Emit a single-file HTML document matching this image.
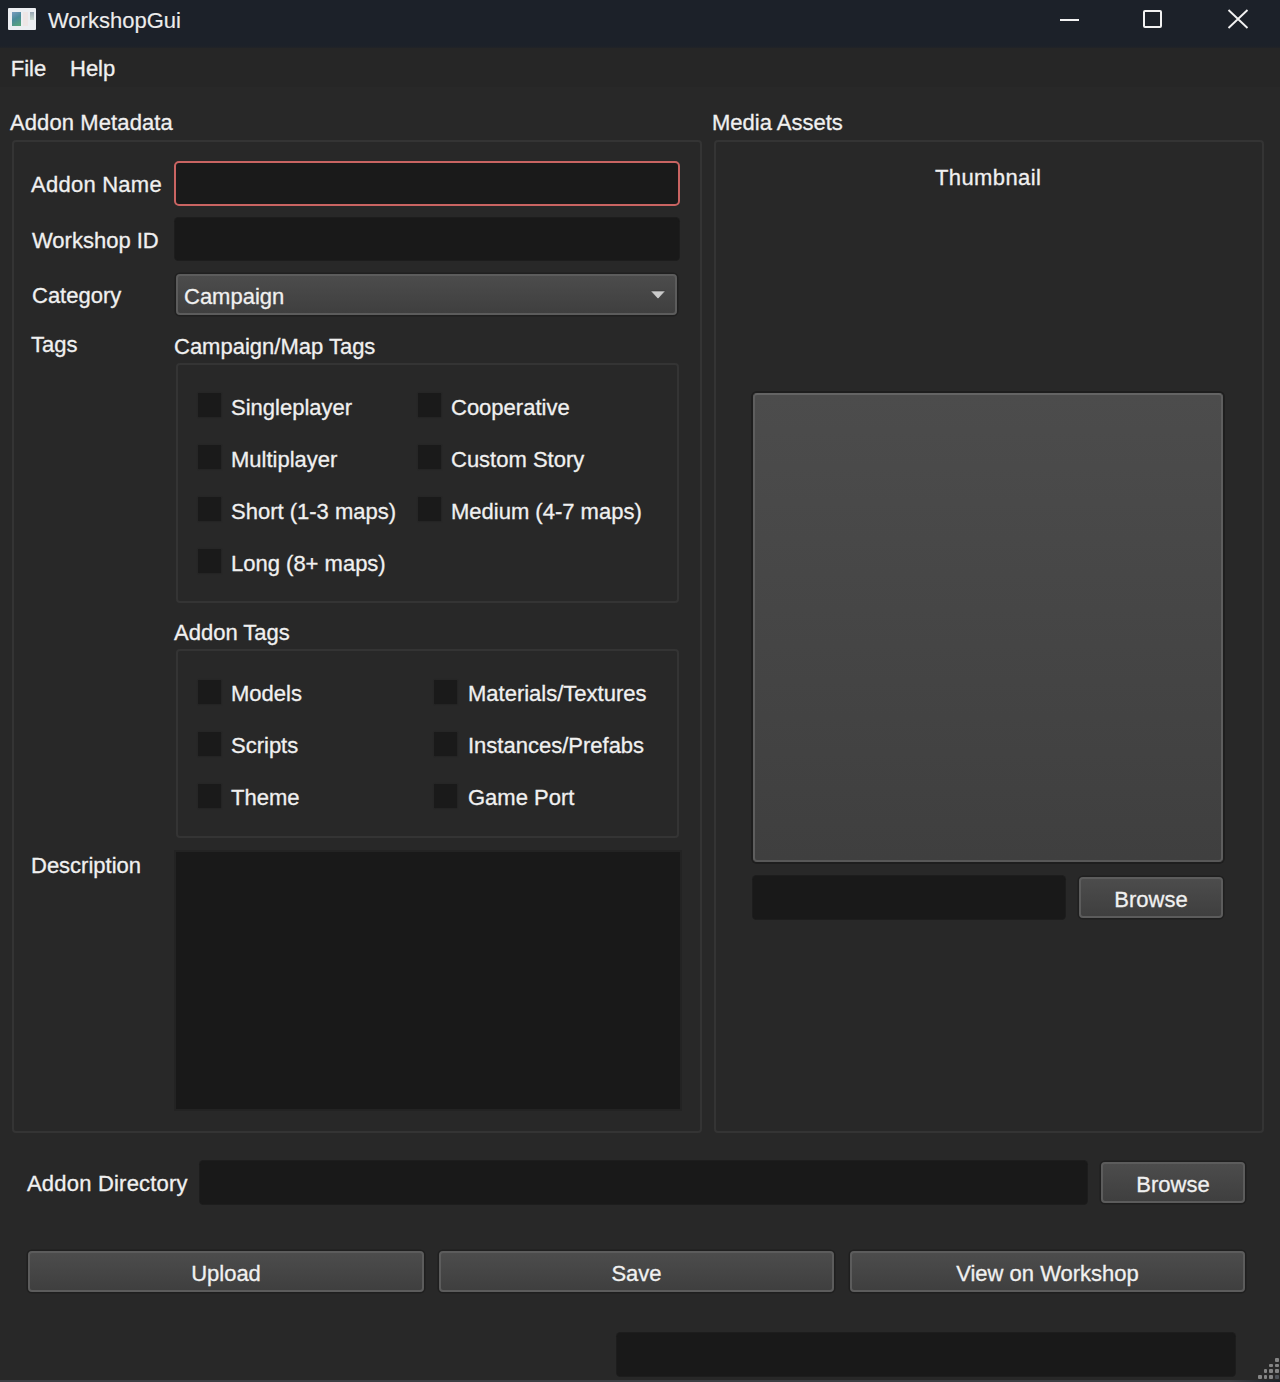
<!DOCTYPE html>
<html><head><meta charset="utf-8">
<style>
*{box-sizing:border-box;margin:0;padding:0}
html,body{width:1280px;height:1382px;overflow:hidden;background:#282828}
body{position:relative;font-family:"Liberation Sans",sans-serif;font-size:22px;color:#f0f0f0;-webkit-text-stroke:0.3px #f0f0f0}
.a{position:absolute}
.t{position:absolute;line-height:25px;white-space:nowrap}
#title{left:0;top:0;width:1280px;height:50px;background:linear-gradient(#1c2129 0,#1c2129 46px,#262626 50px)}
#menu{left:0;top:48px;width:1280px;height:39px;background:#262626}
.grp{position:absolute;border:2px solid #343434;border-radius:4px}
.inp{position:absolute;background:#191919;border-radius:3.5px;box-shadow:0 0 0 1px #1d1d1d}
.btn{position:absolute;border:2px solid #5c5c5c;border-radius:4px;background:linear-gradient(#4c4c4c,#3f3f3f);box-shadow:0 0 0 1.5px #1f1f1f}
.btn span{position:absolute;left:0;right:0;text-align:center;line-height:25px}
.cb{position:absolute;width:23px;height:23.5px;background:#1a1a1a;box-shadow:0 0 1.5px 0.5px #1e1e1e;margin-left:0.2px;margin-top:0.2px}
</style></head><body>
<div id="title" class="a"></div>
<!-- app icon -->
<div class="a" style="left:8px;top:8px;width:28px;height:22px;background:#eceef2;border-radius:1px"></div>
<div class="a" style="left:12px;top:12px;width:9px;height:14px;background:linear-gradient(150deg,#7a9cc0,#4a8a9a 45%,#5aa878)"></div>
<div class="a" style="left:23px;top:12px;width:5px;height:14px;background:#eee6e6"></div>
<div class="a" style="left:30px;top:12px;width:4px;height:8px;background:linear-gradient(#98a6b4,#c8d8cc)"></div>
<div class="t" style="left:48px;top:8px;color:#ececec;-webkit-text-stroke:0.15px #ececec">WorkshopGui</div>
<!-- window controls -->
<div class="a" style="left:1060px;top:19px;width:19px;height:2px;background:#f2f2f2"></div>
<div class="a" style="left:1143px;top:10px;width:19px;height:18px;border:2px solid #f2f2f2;border-radius:2px"></div>
<svg class="a" style="left:1226px;top:8px" width="24" height="22" viewBox="0 0 24 22"><path d="M2.5 2 L21.5 20 M21.5 2 L2.5 20" stroke="#f2f2f2" stroke-width="1.9"/></svg>

<div id="menu" class="a"></div>
<div class="t" style="left:10.8px;top:56px">File</div>
<div class="t" style="left:70px;top:56px">Help</div>

<div class="t" style="left:10px;top:110px;letter-spacing:0.1px">Addon Metadata</div>
<div class="grp" style="left:12px;top:139.5px;width:690px;height:993px"></div>

<div class="t" style="left:31px;top:172px;letter-spacing:0.25px">Addon Name</div>
<div class="a" style="left:174px;top:161px;width:506px;height:45px;background:#1a1a1a;border:2px solid #c96462;border-radius:5px"></div>
<div class="t" style="left:32px;top:228px">Workshop ID</div>
<div class="inp" style="left:175px;top:218px;width:504px;height:42px"></div>
<div class="t" style="left:32px;top:283px">Category</div>
<div class="btn" style="left:176px;top:274px;width:501px;height:41px"></div>
<div class="t" style="left:184px;top:284px">Campaign</div>
<svg class="a" style="left:648px;top:288px" width="20" height="13" viewBox="0 0 20 13"><path d="M2.6 3 H17.4 L10 11 Z" fill="#cacaca" stroke="#333" stroke-width="0.6" stroke-linejoin="round"/></svg>

<div class="t" style="left:31px;top:332px">Tags</div>
<div class="t" style="left:174px;top:334px">Campaign/Map Tags</div>
<div class="grp" style="left:176px;top:363.3px;width:503.4px;height:240px"></div>
<div class="cb" style="left:198px;top:393px"></div><div class="t" style="left:231px;top:395px">Singleplayer</div>
<div class="cb" style="left:418px;top:393px"></div><div class="t" style="left:451px;top:395px">Cooperative</div>
<div class="cb" style="left:198px;top:445px"></div><div class="t" style="left:231px;top:447px">Multiplayer</div>
<div class="cb" style="left:418px;top:445px"></div><div class="t" style="left:451px;top:447px">Custom Story</div>
<div class="cb" style="left:198px;top:497px"></div><div class="t" style="left:231px;top:499px">Short (1-3 maps)</div>
<div class="cb" style="left:418px;top:497px"></div><div class="t" style="left:451px;top:499px">Medium (4-7 maps)</div>
<div class="cb" style="left:198px;top:549px"></div><div class="t" style="left:231px;top:551px">Long (8+ maps)</div>

<div class="t" style="left:174px;top:620px">Addon Tags</div>
<div class="grp" style="left:176px;top:649.4px;width:503.4px;height:189px"></div>
<div class="cb" style="left:198px;top:680px"></div><div class="t" style="left:231px;top:681px">Models</div>
<div class="cb" style="left:434px;top:680px"></div><div class="t" style="left:468px;top:681px">Materials/Textures</div>
<div class="cb" style="left:198px;top:732px"></div><div class="t" style="left:231px;top:733px">Scripts</div>
<div class="cb" style="left:434px;top:732px"></div><div class="t" style="left:468px;top:733px">Instances/Prefabs</div>
<div class="cb" style="left:198px;top:784px"></div><div class="t" style="left:231px;top:785px">Theme</div>
<div class="cb" style="left:434px;top:784px"></div><div class="t" style="left:468px;top:785px">Game Port</div>

<div class="t" style="left:31px;top:853px">Description</div>
<div class="a" style="left:176px;top:852px;width:503.5px;height:257px;background:#191919;box-shadow:0 0 0 2px #232323"></div>

<!-- media assets -->
<div class="t" style="left:712px;top:110px">Media Assets</div>
<div class="grp" style="left:714.3px;top:139.5px;width:550px;height:993px"></div>
<div class="t" style="left:935px;top:165px;letter-spacing:0.4px">Thumbnail</div>
<div class="a" style="left:753px;top:393px;width:470px;height:469px;background:linear-gradient(#4c4c4c,#3f3f3f);border:2px solid;border-color:#646464 #5e5e5e #585858 #5e5e5e;border-radius:4px;box-shadow:0 0 0 2px #1e1e1e"></div>
<div class="inp" style="left:753px;top:876px;width:312px;height:43px"></div>
<div class="btn" style="left:1079px;top:877px;width:144px;height:41px"><span style="top:8px">Browse</span></div>

<!-- bottom -->
<div class="t" style="left:27px;top:1171px;letter-spacing:0.2px">Addon Directory</div>
<div class="inp" style="left:199.5px;top:1160.5px;width:887px;height:43px"></div>
<div class="btn" style="left:1101px;top:1162px;width:144px;height:41px"><span style="top:8px">Browse</span></div>

<div class="btn" style="left:28px;top:1251px;width:396px;height:41px"><span style="top:8px">Upload</span></div>
<div class="btn" style="left:439px;top:1251px;width:395px;height:41px"><span style="top:8px">Save</span></div>
<div class="btn" style="left:850px;top:1251px;width:395px;height:41px"><span style="top:8px">View on Workshop</span></div>

<div class="inp" style="left:617px;top:1333px;width:618px;height:43px"></div>
<!-- grip --><div class="a" style="left:1275.0px;top:1358.1px;width:3.8px;height:3.8px;background:#858585;border-radius:1px"></div><div class="a" style="left:1269.2px;top:1363.7px;width:3.8px;height:3.8px;background:#858585;border-radius:1px"></div><div class="a" style="left:1275.0px;top:1363.7px;width:3.8px;height:3.8px;background:#858585;border-radius:1px"></div><div class="a" style="left:1263.7px;top:1369.2px;width:3.8px;height:3.8px;background:#858585;border-radius:1px"></div><div class="a" style="left:1269.2px;top:1369.2px;width:3.8px;height:3.8px;background:#858585;border-radius:1px"></div><div class="a" style="left:1275.0px;top:1369.2px;width:3.8px;height:3.8px;background:#858585;border-radius:1px"></div><div class="a" style="left:1258.1px;top:1374.8px;width:3.8px;height:3.8px;background:#858585;border-radius:1px"></div><div class="a" style="left:1263.7px;top:1374.8px;width:3.8px;height:3.8px;background:#858585;border-radius:1px"></div><div class="a" style="left:1269.2px;top:1374.8px;width:3.8px;height:3.8px;background:#858585;border-radius:1px"></div><div class="a" style="left:1275.0px;top:1374.8px;width:3.8px;height:3.8px;background:#50545a;border-radius:1px"></div>
<div class="a" style="left:0;top:1380px;width:1280px;height:2px;background:linear-gradient(90deg,#3c3f44,#3c3f44 1230px,#1a2028)"></div>
</body></html>
